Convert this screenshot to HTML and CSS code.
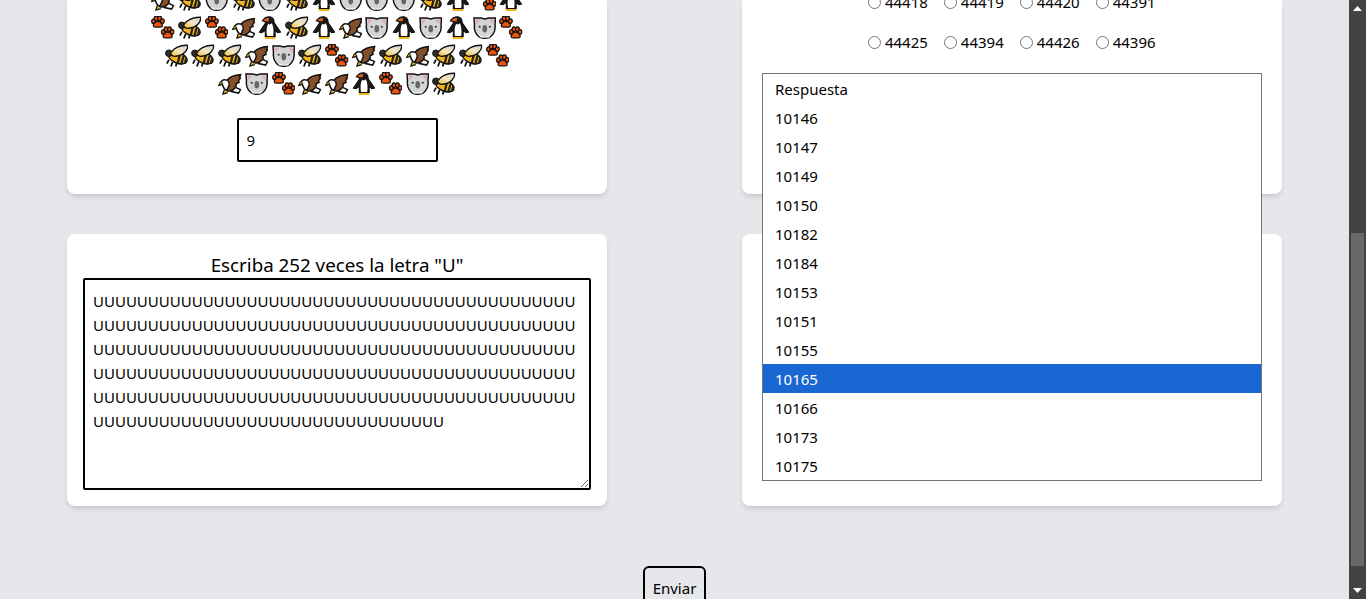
FILE: index.html
```html
<!DOCTYPE html>
<html lang="es">
<head>
    <meta charset="UTF-8">
    <title>Formulario</title>
    <link rel="stylesheet" href="styles.css">
</head>
<body>
<svg class="defs" width="0" height="0">
    <defs>
        <g id="paw-one">
            <ellipse cx="-4.3" cy="-1.2" rx="2" ry="2.300"/>
            <ellipse cx="-1.600" cy="-4" rx="2" ry="2.400"/>
            <ellipse cx="1.800" cy="-4" rx="2" ry="2.400"/>
            <ellipse cx="4.500" cy="-1.2" rx="2" ry="2.300"/>
            <path d="M0 -1C2.800 -1 5 1.800 4.600 3.800C4.200 5.400 1.400 4.800 0 4.800C-1.400 4.800-4.200 5.400-4.600 3.800C-5 1.800-2.800 -1 0 -1Z"/>
        </g>
        <symbol id="paw" viewBox="0 0 24 24">
            <use href="#paw-one" x="7" y="6.500" fill="#ea540c" stroke="#111" stroke-width="1.300"/>
            <use href="#paw-one" x="17" y="17.500" fill="#ea540c" stroke="#111" stroke-width="1.300"/>
        </symbol>
        <linearGradient id="wing" x1="0" y1="1" x2="1" y2="0">
            <stop offset="0" stop-color="#f2b51d"/>
            <stop offset=".45" stop-color="#f3e6bd"/>
            <stop offset="1" stop-color="#d6d6d6"/>
        </linearGradient>
        <symbol id="bee" viewBox="0 0 24 24">
            <path d="M4 16L2 20M8 18L6 23M12 19L11 23" stroke="#111" stroke-width="1.800" fill="none"/>
            <ellipse cx="13" cy="14" rx="10" ry="5.500" transform="rotate(22 13 14)" fill="#f4b41c" stroke="#111" stroke-width="1.500"/>
            <path d="M15.500 10L13 19.500M19 12L16.500 21M21.800 14L20.500 19" stroke="#222" stroke-width="2.300" fill="none"/>
            <circle cx="4" cy="9.500" r="3.400" fill="#2c2c2c" stroke="#111" stroke-width="1"/>
            <path d="M5.500 9.500C8 4.500 15 1 23 1.300C24 5.500 19.500 11.500 11 12.500C9 12.800 6.500 12 5.500 9.500Z" fill="url(#wing)" stroke="#111" stroke-width="1.400"/>
        </symbol>
        <symbol id="eagle" viewBox="0 0 24 24">
            <path d="M15 14.500L23 18L21 21.500L14 20Z" fill="#fff" stroke="#111" stroke-width="1.500"/>
            <path d="M9 8.500C12 4.500 17 3 23.500 2.500L22 5.500L23 6L21 9L21.500 10.500L18.500 12L18.500 14.500C17 18 13 20.500 9 19L6 15Z" fill="#84502a" stroke="#111" stroke-width="1.500"/>
            <path d="M7 8C4.500 8 2.500 10 1 13.500L4.500 12.500C5 15 6 17.500 9 19L11.500 13C11.500 10 9.500 8 7 8Z" fill="#fff" stroke="#111" stroke-width="1.500"/>
            <path d="M1 13.500C1.500 11.500 2.500 10.500 3.800 9.800L4.500 12.500Z" fill="#f4b41c" stroke="#111" stroke-width=".9"/>
            <path d="M6.500 18L5 22.500L10 21" fill="#f4b41c" stroke="#111" stroke-width="1.300"/>
        </symbol>
        <symbol id="koala" viewBox="0 0 24 24">
            <path d="M1 2H8L12 3L16 2H23L22.500 9C23.500 16 19.500 22.800 12 22.800C4.500 22.800 .5 16 1.500 9Z" fill="#d4d4d4" stroke="#111" stroke-width="1.500"/>
            <path d="M2.500 3.500H7.500L3.500 8.500ZM21.500 3.500H16.500L20.500 8.500Z" fill="#e3a9ad"/>
            <ellipse cx="12" cy="13" rx="2.400" ry="3.800" fill="#666"/>
            <circle cx="6.800" cy="11" r="1.100" fill="#333"/>
            <circle cx="17.200" cy="11" r="1.100" fill="#333"/>
            <path d="M5.500 19C8 21.500 16 21.500 18.500 19L16.500 22H7.500Z" fill="#f2f2f2"/>
        </symbol>
        <symbol id="penguin" viewBox="0 0 24 24">
            <path d="M11.500 .8C14.800 .8 16.500 3.500 16.500 7L23 16.500L20 17L17.500 14.500V21H7.500V14.500L4 17L1.500 16.500L7.500 7.500V5.500L4.500 5C6 2.500 8.500 .8 11.500 .8Z" fill="#1a1a1a" stroke="#111" stroke-width="1.200"/>
            <path d="M10.500 8C8.500 11 8.500 17 9.300 20.500H15.500C16.300 16 15.800 11 14.200 7.500C13 8.800 11.700 9 10.500 8Z" fill="#fff"/>
            <path d="M5.500 4.500C7 2.500 9.500 1.500 11.500 2.300L10.500 5.500Z" fill="#e0641a"/>
            <path d="M7 22.500H17.500" stroke="#f4b41c" stroke-width="2.200"/>
        </symbol>
        <symbol id="arrow-up" viewBox="0 0 9 5">
            <path d="M4.500 0L9 5H0Z"/>
        </symbol>
    </defs>
</svg>

<div class="page">
    <main class="content">
        <div class="cards">
            <section class="card card-cut">
                <div class="emoji-row">
                    <svg class="emoji"><use href="#eagle"/></svg><svg class="emoji"><use href="#bee"/></svg><svg class="emoji"><use href="#koala"/></svg><svg class="emoji"><use href="#bee"/></svg><svg class="emoji"><use href="#koala"/></svg><svg class="emoji"><use href="#bee"/></svg><svg class="emoji"><use href="#penguin"/></svg><svg class="emoji"><use href="#koala"/></svg><svg class="emoji"><use href="#koala"/></svg><svg class="emoji"><use href="#koala"/></svg><svg class="emoji"><use href="#bee"/></svg><svg class="emoji"><use href="#penguin"/></svg><svg class="emoji"><use href="#paw"/></svg><svg class="emoji"><use href="#penguin"/></svg>
                </div>
                <div class="emoji-row">
                    <svg class="emoji"><use href="#paw"/></svg><svg class="emoji"><use href="#bee"/></svg><svg class="emoji"><use href="#paw"/></svg><svg class="emoji"><use href="#eagle"/></svg><svg class="emoji"><use href="#penguin"/></svg><svg class="emoji"><use href="#bee"/></svg><svg class="emoji"><use href="#penguin"/></svg><svg class="emoji"><use href="#eagle"/></svg><svg class="emoji"><use href="#koala"/></svg><svg class="emoji"><use href="#penguin"/></svg><svg class="emoji"><use href="#koala"/></svg><svg class="emoji"><use href="#penguin"/></svg><svg class="emoji"><use href="#koala"/></svg><svg class="emoji"><use href="#paw"/></svg>
                </div>
                <div class="emoji-row">
                    <svg class="emoji"><use href="#bee"/></svg><svg class="emoji"><use href="#bee"/></svg><svg class="emoji"><use href="#bee"/></svg><svg class="emoji"><use href="#eagle"/></svg><svg class="emoji"><use href="#koala"/></svg><svg class="emoji"><use href="#bee"/></svg><svg class="emoji"><use href="#paw"/></svg><svg class="emoji"><use href="#eagle"/></svg><svg class="emoji"><use href="#bee"/></svg><svg class="emoji"><use href="#eagle"/></svg><svg class="emoji"><use href="#bee"/></svg><svg class="emoji"><use href="#bee"/></svg><svg class="emoji"><use href="#paw"/></svg>
                </div>
                <div class="emoji-row">
                    <svg class="emoji"><use href="#eagle"/></svg><svg class="emoji"><use href="#koala"/></svg><svg class="emoji"><use href="#paw"/></svg><svg class="emoji"><use href="#eagle"/></svg><svg class="emoji"><use href="#eagle"/></svg><svg class="emoji"><use href="#penguin"/></svg><svg class="emoji"><use href="#paw"/></svg><svg class="emoji"><use href="#koala"/></svg><svg class="emoji"><use href="#bee"/></svg>
                </div>
                <input class="count-input" type="text" value="9">
            </section>

            <section class="card card-cut card-options">
                <div class="radio-row">
                    <label class="radio"><input type="radio" name="r">44418</label>
                    <label class="radio"><input type="radio" name="r">44419</label>
                    <label class="radio"><input type="radio" name="r">44420</label>
                    <label class="radio"><input type="radio" name="r">44391</label>
                </div>
                <div class="radio-row">
                    <label class="radio"><input type="radio" name="r">44425</label>
                    <label class="radio"><input type="radio" name="r">44394</label>
                    <label class="radio"><input type="radio" name="r">44426</label>
                    <label class="radio"><input type="radio" name="r">44396</label>
                </div>
                <ul class="dropdown">
                    <li>Respuesta</li>
                    <li>10146</li>
                    <li>10147</li>
                    <li>10149</li>
                    <li>10150</li>
                    <li>10182</li>
                    <li>10184</li>
                    <li>10153</li>
                    <li>10151</li>
                    <li>10155</li>
                    <li class="on">10165</li>
                    <li>10166</li>
                    <li>10173</li>
                    <li>10175</li>
                </ul>
            </section>

            <section class="card">
                <h2 class="card-title">Escriba 252 veces la letra "U"</h2>
                <textarea class="answer" spellcheck="false">UUUUUUUUUUUUUUUUUUUUUUUUUUUUUUUUUUUUUUUUUUUU
UUUUUUUUUUUUUUUUUUUUUUUUUUUUUUUUUUUUUUUUUUUU
UUUUUUUUUUUUUUUUUUUUUUUUUUUUUUUUUUUUUUUUUUUU
UUUUUUUUUUUUUUUUUUUUUUUUUUUUUUUUUUUUUUUUUUUU
UUUUUUUUUUUUUUUUUUUUUUUUUUUUUUUUUUUUUUUUUUUU
UUUUUUUUUUUUUUUUUUUUUUUUUUUUUUUU</textarea>
            </section>

            <section class="card"></section>
        </div>
        <div class="actions">
            <button class="send" type="button">Enviar</button>
        </div>
    </main>

    <div class="scrollbar">
        <svg class="scroll-arrow"><use href="#arrow-up"/></svg>
        <div class="scroll-track">
            <div class="scroll-thumb"></div>
        </div>
        <svg class="scroll-arrow down"><use href="#arrow-up"/></svg>
    </div>
</div>
</body>
</html>
```

FILE: styles.css
```css
*{margin:0;padding:0;box-sizing:border-box;}
html,body{height:599px;overflow:hidden;}
body{
    font-family:"Noto Sans","Open Sans",sans-serif;
    font-size:15px;
    line-height:24px;
    color:#000;
    background:#e5e7eb;
}
.defs{display:block;width:0;height:0;}
.page{
    display:flex;
    height:599px;
}
.content{
    flex:1;
    min-width:0;
    height:599px;
    overflow:hidden;
}
.cards{
    display:grid;
    grid-template-columns:540px 540px;
    grid-template-rows:194px 272px;
    gap:40px 135px;
    justify-content:center;
}
.card{
    position:relative;
    background:#fff;
    border-radius:8px;
    padding:16px;
    box-shadow:0 4px 6px -1px rgba(0,0,0,.1),0 2px 4px -2px rgba(0,0,0,.1);
}
.card-cut{
    display:flex;
    flex-direction:column;
    justify-content:flex-end;
    align-items:center;
    border-radius:0 0 8px 8px;
    padding:0 16px 32px;
}
.emoji-row{
    display:flex;
    justify-content:center;
    align-items:center;
    height:28px;
    flex:none;
}
.emoji{
    width:23.5px;
    height:23.5px;
    margin:0 1.65px;
    flex:none;
}
.count-input{
    width:201px;
    height:44px;
    flex:none;
    margin-top:20px;
    padding:0 8px;
    border:2px solid #000;
    border-radius:2px;
    font:inherit;
    color:#000;
    background:#fff;
    outline:none;
}
.card-options{
    padding-bottom:132px;
}
.radio-row{
    display:flex;
    justify-content:center;
    gap:16.5px;
    height:40px;
    align-items:center;
    flex:none;
}
.radio{
    display:flex;
    align-items:center;
}
.radio input{
    width:13px;
    height:13px;
    margin:0 3.5px 0 0;
}
.dropdown{
    position:absolute;
    left:20px;
    top:73px;
    width:500px;
    height:408px;
    background:#fff;
    border:1px solid #767676;
    list-style:none;
    z-index:2;
}
.dropdown li{
    height:29px;
    line-height:31px;
    padding-left:12px;
}
.dropdown li.on{
    background:#1967d2;
    color:#fff;
}
.card-title{
    height:28px;
    font-size:18.75px;
    font-weight:400;
    line-height:30px;
    text-align:center;
}
.answer{
    display:block;
    width:508px;
    height:212px;
    padding:9px 8px;
    border:2px solid #000;
    border-radius:2px;
    font:inherit;
    color:#000;
    background:#fff;
    outline:none;
    overflow:hidden;
    resize:both;
    white-space:pre;
}
.actions{
    display:flex;
    justify-content:center;
    margin-top:60px;
}
.send{
    padding:8px 8px;
    border:2px solid #000;
    border-radius:6px;
    background:transparent;
    font:inherit;
    color:#000;
}
.scrollbar{
    display:flex;
    flex-direction:column;
    align-items:center;
    width:17px;
    height:599px;
    flex:none;
    background:#424242;
}
.scroll-arrow{
    width:9px;
    height:5px;
    margin:6px 0;
    fill:#fff;
    flex:none;
}
.scroll-arrow.down{transform:rotate(180deg);}
.scroll-track{
    flex:1;
    width:100%;
    padding:216px 2px 16px;
}
.scroll-thumb{
    height:333px;
    background:#686868;
}
```
